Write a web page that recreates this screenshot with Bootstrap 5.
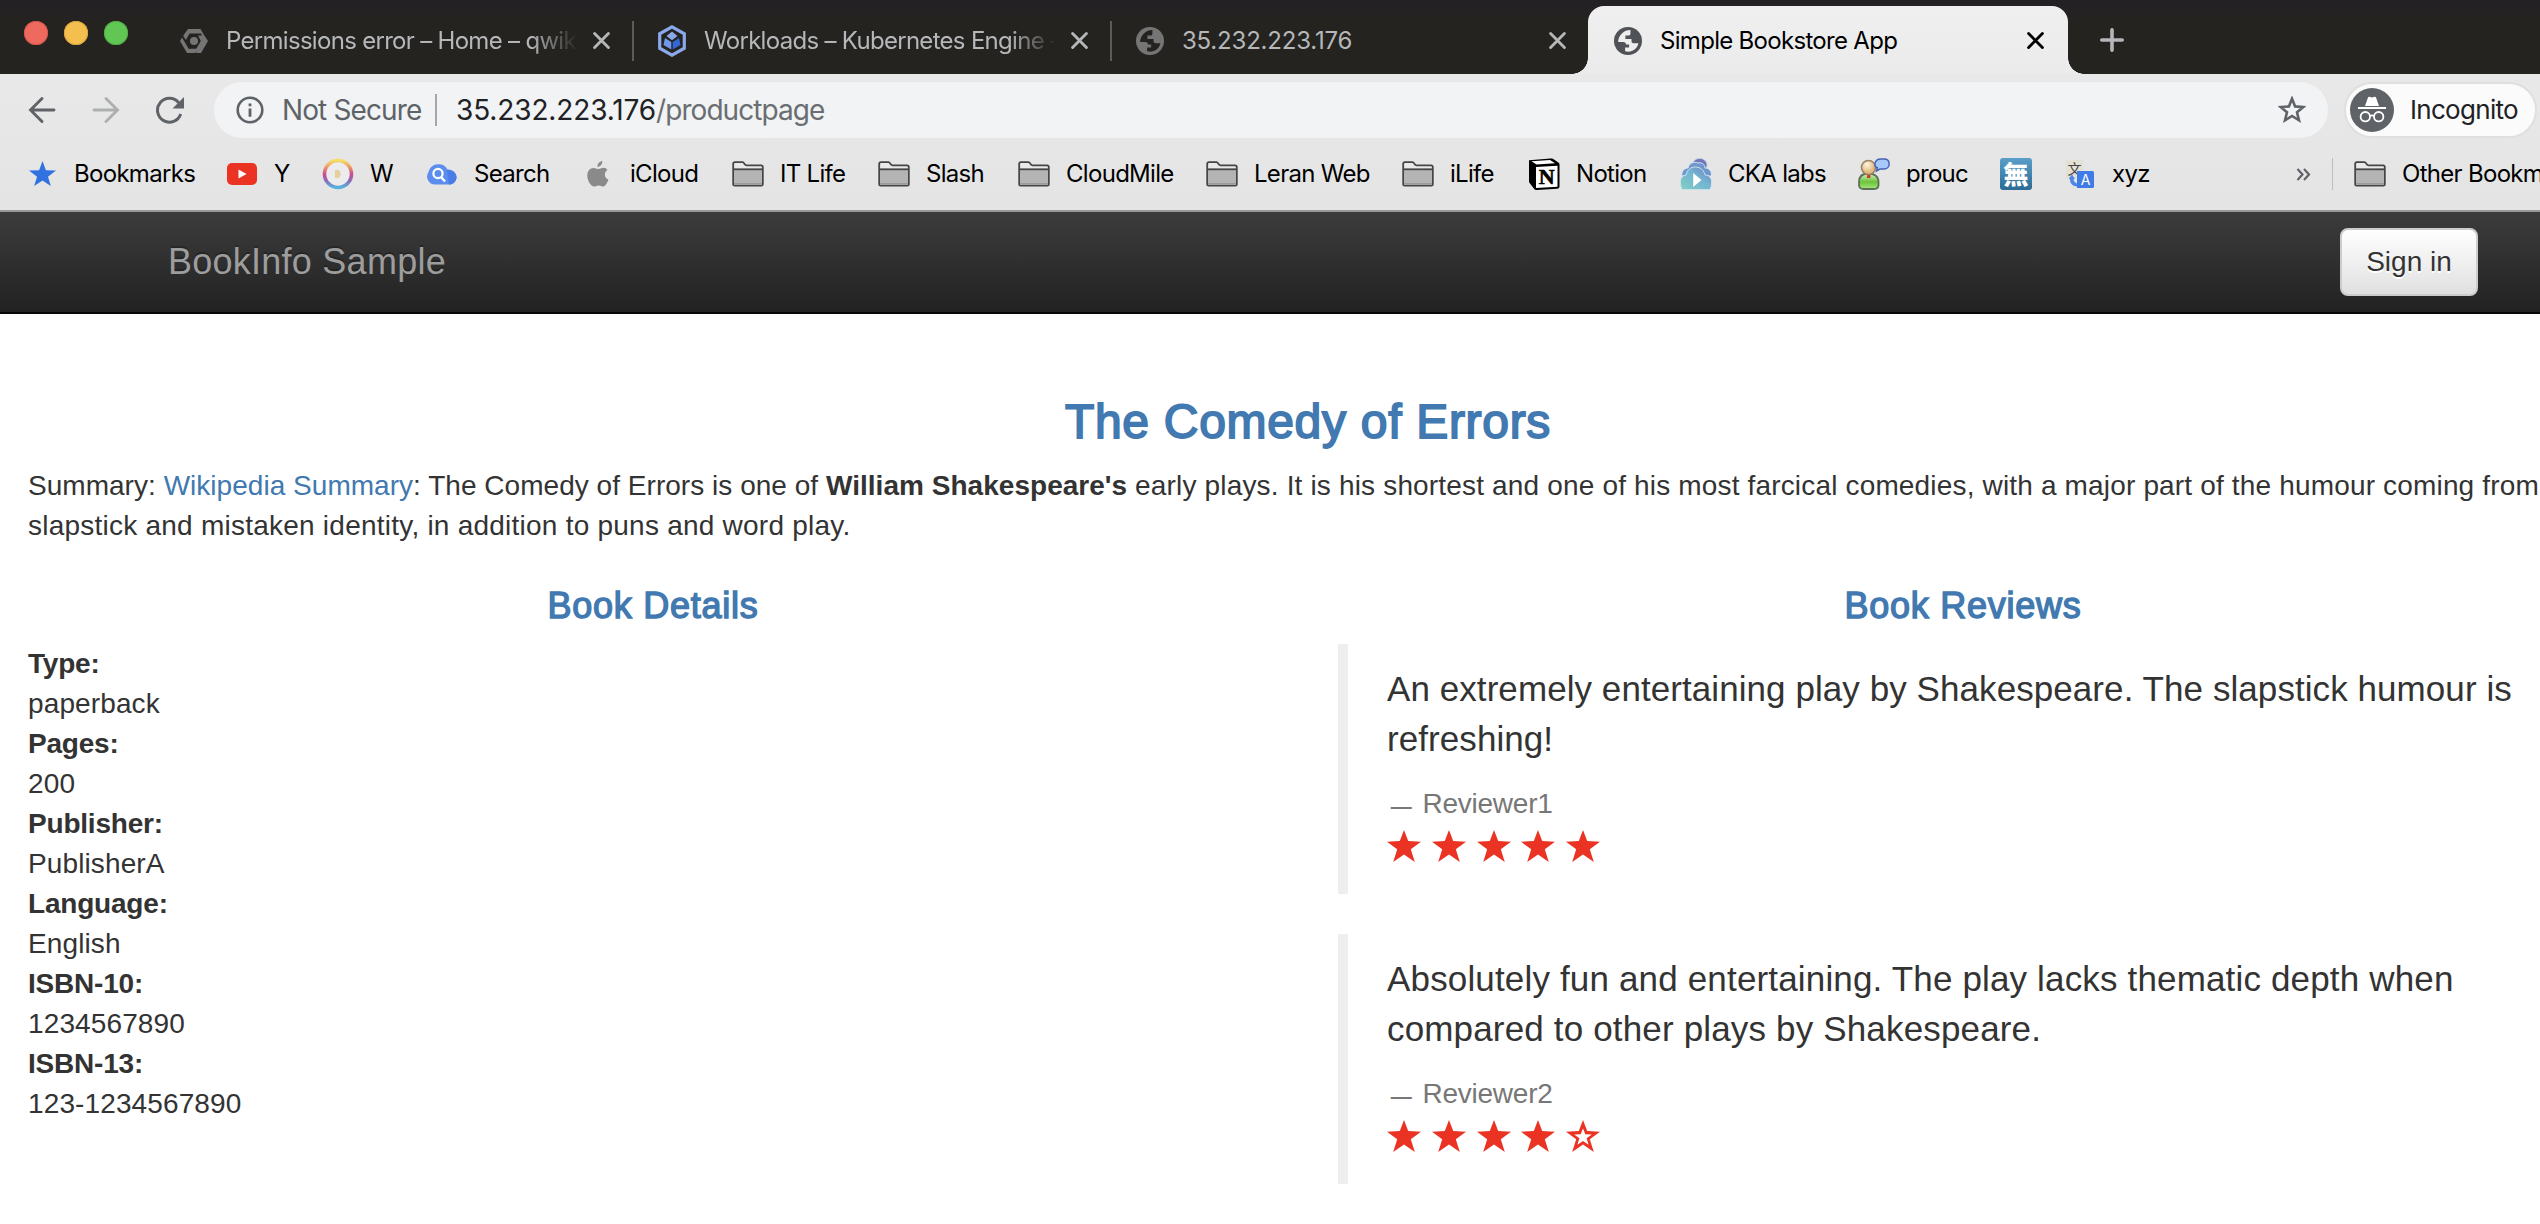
<!DOCTYPE html>
<html lang="en">
<head>
<meta charset="utf-8">
<title>Simple Bookstore App</title>
<link rel="stylesheet" href="https://cdn.jsdelivr.net/npm/bootstrap@5.3.0/dist/css/bootstrap.min.css">
<style>
html,body{width:2540px;height:1224px;overflow:hidden;margin:0;background:#fff}
body{font-family:"Liberation Sans",Arial,sans-serif;font-size:28px;line-height:40px;color:#333}
svg{display:block;flex:none}
.browser{font-family:Inter,Roboto,sans-serif;font-size:24px;line-height:32px;letter-spacing:-.7px;color:#000;background:linear-gradient(#ebebeb,#e4e4e4);height:212px;border-bottom:2px solid #999}
.digits{letter-spacing:-.2px}
/* tab strip */
.strip{height:74px;background:linear-gradient(#242124 0,#242124 6px,#242320 20px);color:#b5b7b9}
.lights{width:154px;padding:21px 0 0 24px;gap:16px}
.lights i{width:24px;height:24px;border-radius:50%}
.l-red{background:#ee6a5f;box-shadow:inset 0 0 0 1px #d9554b}
.l-yel{background:#f5bf4f;box-shadow:inset 0 0 0 1px #dca73c}
.l-grn{background:#62c655;box-shadow:inset 0 0 0 1px #50ae43}
.btab{width:478px;padding:7px 22px 0 26px;position:relative}
.btab .ico{width:28px;margin-right:18px}
.btab .label{width:350px;overflow:hidden;white-space:nowrap}
.fade-end{-webkit-mask-image:linear-gradient(90deg,#000 305px,transparent 352px);mask-image:linear-gradient(90deg,#000 305px,transparent 352px)}
.btab .shut{margin-left:17px}
.line-end{background:linear-gradient(#5c5c5b,#5c5c5b) no-repeat 478px 21px/2px 40px;background-origin:border-box;width:480px;margin-right:-2px}
.btab.on{width:480px;margin-top:6px;height:68px;padding-top:1px;background:linear-gradient(#efefef,#ebebeb);border-radius:16px 16px 0 0;color:#000}
.btab.on::before,.btab.on::after{content:"";position:absolute;bottom:0;width:16px;height:16px}
.btab.on::before{left:-16px;background:radial-gradient(circle at 0 0,transparent 15.5px,#ebebeb 16px)}
.btab.on::after{right:-16px;background:radial-gradient(circle at 100% 0,transparent 15.5px,#ebebeb 16px)}
.plus{margin:28px 0 0 32px}
/* address row */
.address{height:72px;padding:8px 3px 8px 27px}
.nav-ico{width:64px}
.omni{width:2114px;height:56px;margin-left:-5px;border-radius:28px;background:#f1f3f4;padding:0 22px 0 22px;font-size:28px}
.secure{color:#5f6368;letter-spacing:-.88px;margin-left:18px;width:153px}
.rule{width:2px;height:32px;background:#a4a7ab}
.thin{width:1px;background:#bdbdbd}
.host{margin-left:19px;color:#202124;letter-spacing:-.12px}
.path{color:#6a6d71;letter-spacing:-.95px}
.incog{width:193px;height:56px;margin-left:16px;border:2px solid #dfdfdf;border-radius:28px;background:#fbfbfb;padding-left:4px;font-size:26px;color:#202124}
.incog span{margin-left:16px}
/* bookmarks */
.marks{display:grid;grid-template-columns:200px 96px 104px 156px 150px 146px 140px 188px 196px 126px 152px 178px 142px 64px 232px 36px 22px auto;padding:12px 0 0 26px;height:64px;width:2640px;align-items:start}
.marks>div{display:flex;align-items:center;gap:16px;height:32px;white-space:nowrap}
.marks .ico{width:32px;display:flex;justify-content:center}
/* page */
.topbar{height:102px;padding:0 62px 0 168px;background:linear-gradient(#3c3c3c,#222);border-bottom:2px solid #080808}
.topbar .navbar-brand{font-size:36px;line-height:40px;color:#9d9d9d;letter-spacing:.25px;text-shadow:0 -2px 0 rgba(0,0,0,.25);margin:0;padding:0}
.signin{width:138px;height:68px;padding:0;font-size:28px;line-height:40px;color:#333;border:2px solid #ccc;border-radius:8px;background:linear-gradient(#fff,#e0e0e0);text-shadow:0 2px 0 #fff;box-shadow:inset 0 2px 0 rgba(255,255,255,.15)}
.sheet{width:2620px;margin-left:-2px}
.sheet>.row{--bs-gutter-x:60px;margin:0}
.lower{padding-top:40px}
h3,h4{color:#4179b0;text-align:center;font-weight:400;margin:0}
h3{font-size:48px;line-height:52px;letter-spacing:.7px;-webkit-text-stroke:1.8px #4179b0;padding-top:82px}
h4{font-size:36px;line-height:40px;letter-spacing:.76px;-webkit-text-stroke:1.4px #4179b0}
.summary{margin:18px 0 0;white-space:nowrap}
.summary a{color:#4179b0;text-decoration:none}
.s1{letter-spacing:.03px}.s2{letter-spacing:.165px}.s3{letter-spacing:.235px}
.facts{margin:18px 0 0}
.facts dt{font-weight:700;letter-spacing:-.2px}
.facts dd{margin:0;letter-spacing:.12px}
.review{border-left:10px solid #eee;padding:20px 0 0 39px;height:250px;margin:0 0 40px;white-space:nowrap}
h4+.review{margin-top:18px}
.review p{font-size:35px;line-height:50px;margin:0 0 20px;letter-spacing:.16px}
.review .w1{letter-spacing:.07px}
.review cite{display:block;font-style:normal;color:#777;letter-spacing:-.25px;height:40px}
.dash{display:inline-block;width:28px;text-align:center;font-size:21px;font-weight:700;line-height:1}
.stars{gap:10.8px;padding-top:6px}
</style>
</head>
<body>
<svg width="0" height="0" class="position-absolute">
<defs>
<symbol id="x" viewBox="0 0 16 16"><path d="M1.500 1.500l13 13M14.500 1.500l-13 13" stroke="currentColor" stroke-width="2.700" stroke-linecap="round"/></symbol>
<symbol id="globe" viewBox="0 0 28 28"><circle cx="14" cy="14" r="14" fill="currentColor"/><path d="M16.500 3c-4 .1-7 1.500-9.300 4.200-2 2.300-3 4.900-3.100 7.800h5.200c2 0 2.600 1 2.600 2.400h3.200v3.200h-4v3.700c3.800 1.200 8.100-.1 10.800-3 1.200-1.400 2.200-3.400 2.500-5.100h-4.800c-1.600 0-2.100-1-2.100-2.400v-1.900h-6.100V8.500h3.400c1.500 0 1.600-1 1.600-2.500z" fill="var(--land)"/></symbol>
<symbol id="folder" viewBox="0 0 32 26"><path d="M1.200 23V3c0-1.200.6-1.800 1.800-1.800h7.500c1.800 0 2 3.200 4 3.200H29c1.200 0 1.800.6 1.800 1.800V23c0 1-.6 1.600-1.600 1.600H2.800c-1 0-1.600-.6-1.600-1.600z" fill="#e9e9e9" stroke="#454545" stroke-width="1.800"/><path d="M2 8.500h28V23.700H2z" fill="#b4b4b4"/><path d="M2 22h28v1.700H2z" fill="#9b9b9b"/><path d="M1.200 8.300h29.600" stroke="#454545" stroke-width="1.800"/></symbol>
<symbol id="st" viewBox="0 0 34 32"><path d="M17 0l4.200 11.100L34 11.700 23.800 19.300 27.800 32 17 24.600 6.200 32l4-12.700L0 11.700l12.800-.6z" fill="#eb3323"/></symbol>
<symbol id="st0" viewBox="0 0 34 32"><path fill-rule="evenodd" d="M17 0l4.200 11.100L34 11.700 23.800 19.300 27.800 32 17 24.600 6.200 32l4-12.700L0 11.700l12.800-.6zM17 8.500l-2.300 5.700-6.500.2 5.200 3.900-2 6.500L17 21l5.600 3.800-2-6.500 5.200-3.900-6.500-.2z" fill="#eb3323"/></symbol>
</defs></svg>

<div class="browser">
  <div class="strip d-flex">
    <div class="lights d-flex"><i class="l-red"></i><i class="l-yel"></i><i class="l-grn"></i></div>
    <div class="btab line-end d-flex align-items-center">
      <svg class="ico" height="28" viewBox="0 0 28 26"><path d="M8 1h12.500l2.700 4.500H9.600L5.800 12 3.200 7.800zM0 13l2-3.500L8.800 21l2-.2h7L15.200 25H7zM21 5.500h2L28 13l-7 12h-4.500l-1.500-2.200L20.800 13 18 7.500h4z" fill="#757575"/><circle cx="14" cy="13" r="4" fill="#757575"/></svg>
      <div class="label fade-end">Permissions error – Home – qwikl</div>
      <svg class="shut" width="17" height="17"><use href="#x"/></svg>
    </div>
    <div class="btab line-end d-flex align-items-center">
      <svg class="ico" height="32" viewBox="0 0 28 32"><path d="M14 1.800l12.300 7v14.400L14 30.200 1.700 23.200V8.800z" fill="none" stroke="#8aa8ea" stroke-width="3.200"/><path d="M14 6.500l5.500 4.500L14 15.200 8.500 11z" fill="#8aa8ea"/><path d="M7 13l6.300 4v7.500L5.500 20z" fill="#6f97ea"/><path d="M21 13l-6.300 4v7.500l7.800-4.500z" fill="#3367d6"/></svg>
      <div class="label fade-end">Workloads – Kubernetes Engine –</div>
      <svg class="shut" width="17" height="17"><use href="#x"/></svg>
    </div>
    <div class="btab d-flex align-items-center">
      <svg class="ico" height="28" style="--land:#242320" color="#757575"><use href="#globe"/></svg>
      <div class="label digits">35.232.223.176</div>
      <svg class="shut" width="17" height="17"><use href="#x"/></svg>
    </div>
    <div class="btab on d-flex align-items-center">
      <svg class="ico" height="28" style="--land:#eee" color="#4f5357"><use href="#globe"/></svg>
      <div class="label">Simple Bookstore App</div>
      <svg class="shut" width="17" height="17"><use href="#x"/></svg>
    </div>
    <svg class="plus" width="24" height="24"><path d="M12 1.800v20.400M1.800 12h20.400" stroke="#b5b7b9" stroke-width="3.600" stroke-linecap="round"/></svg>
  </div>

  <div class="address d-flex align-items-center">
    <svg class="nav-ico" height="28" viewBox="0 0 64 28"><path d="M15 2.500L3.500 14 15 25.500M3.500 14H27" fill="none" stroke="#5f6368" stroke-width="2.900" stroke-linecap="round"/></svg>
    <svg class="nav-ico" height="28" viewBox="0 0 64 28"><path d="M15 2.500L26.500 14 15 25.500M26.500 14H3" fill="none" stroke="#aeafb0" stroke-width="2.900" stroke-linecap="round"/></svg>
    <svg class="nav-ico" height="28" viewBox="0 0 64 28"><path d="M25.700 18A11.900 11.900 0 1 1 23.700 6.800" fill="none" stroke="#5f6368" stroke-width="3"/><path d="M29 1v11.500H17.500z" fill="#5f6368"/></svg>
    <div class="omni d-flex align-items-center">
      <svg width="28" height="28" viewBox="0 0 28 28"><circle cx="14" cy="14" r="12.300" fill="none" stroke="#5f6368" stroke-width="2.600"/><path d="M12.600 12.500h2.800v8.300h-2.800zM12.600 7.500h2.800v2.700h-2.800z" fill="#5f6368"/></svg>
      <span class="secure">Not Secure</span>
      <span class="rule"></span>
      <span class="host">35.232.223.176</span><span class="path">/productpage</span>
      <svg class="ms-auto" width="28" height="28" viewBox="0 0 28 28"><path d="M14 2.700l3.100 7.700 8.200.6-6.300 5.300 2 8L14 20l-7 4.300 2-8L2.700 11l8.200-.6z" fill="none" stroke="#5f6368" stroke-width="2.600"/></svg>
    </div>
    <div class="incog d-flex align-items-center">
      <svg width="44" height="44" viewBox="0 0 44 44"><circle cx="22" cy="22" r="22" fill="#5f6368"/><path d="M15 18l3-8.500c.4-1 1.200-.9 2-.5 1.500.6 2.500.6 4 0 .8-.4 1.600-.5 2 .5l3 8.500zM8 19h28v2H8z" fill="#fff"/><g fill="none" stroke="#fff" stroke-width="1.800"><circle cx="15.300" cy="28.700" r="4.700"/><circle cx="28.700" cy="28.700" r="4.700"/><path d="M20 28c1.300-.8 2.700-.8 4 0"/></g></svg>
      <span>Incognito</span>
    </div>
  </div>

  <div class="marks">
    <div><span class="ico"><svg width="27" height="26" viewBox="0 0 27 26"><path d="M13.500 0l3.400 9.300 10.100.3-8 6.100L21.800 25l-8.300-5.400L5.200 25 8 15.700 0 9.600l10.100-.3z" fill="#3272e0"/></svg></span>Bookmarks</div>
    <div><span class="ico"><svg width="30" height="22"><rect width="30" height="22" rx="5" fill="#eb3323"/><path d="M11.500 6.500l8 4.500-8 4.500z" fill="#fff"/></svg></span>Y</div>
    <div><span class="ico"><svg width="32" height="32" viewBox="0 0 32 32"><defs><linearGradient id="rg" x2="0" y2="1"><stop offset="0" stop-color="#f6dc62"/><stop offset=".22" stop-color="#eda06a"/><stop offset=".5" stop-color="#cf4a8d"/><stop offset=".75" stop-color="#8a6dba"/><stop offset="1" stop-color="#56b4dc"/></linearGradient></defs><circle cx="16" cy="16" r="13.500" fill="#ececee" stroke="url(#rg)" stroke-width="3.600"/><path d="M13 12h4l2 4-2 4h-4z" fill="#e6cf9c"/></svg></span>W</div>
    <div><span class="ico"><svg width="30" height="22" viewBox="0 0 30 22"><path d="M8 21.500A8 8 0 0 1 1.500 9 10.300 10.300 0 0 1 20.500 6.500 8 8 0 0 1 29.500 14c0 4-3 7.500-7 7.500z" fill="#5b8def"/><path d="M20 7l2 14.500c4 0 7.500-3.300 7.500-7.300S25 7 20 7z" fill="#4a7ce8"/><circle cx="11" cy="10.500" r="4.600" fill="none" stroke="#fff" stroke-width="2.200"/><path d="M14 14l4 4.500" stroke="#fff" stroke-width="2.400"/></svg></span>Search</div>
    <div><span class="ico"><svg width="22" height="26" viewBox="0 0 22 26"><path d="M15.300 0c.3 3-2 5.800-4.800 5.900C10.200 3 12.500.4 15.300 0zM20.500 9c-4 2.500-3.300 7.800.9 9.500-1 3-3 6.900-5.200 7-1.800 0-2.400-1.100-4.500-1.100s-2.800 1.100-4.500 1.100C3.700 25.500.3 19.500.3 14.500c0-4.900 3-7.600 6.200-7.600 2 0 3.500 1.200 4.800 1.200 1.200 0 3-1.300 5.200-1.300 1.600 0 3 .8 4 2.200z" fill="#8a8a8a"/></svg></span>iCloud</div>
    <div><svg class="ico" height="26"><use href="#folder"/></svg>IT Life</div>
    <div><svg class="ico" height="26"><use href="#folder"/></svg>Slash</div>
    <div><svg class="ico" height="26"><use href="#folder"/></svg>CloudMile</div>
    <div><svg class="ico" height="26"><use href="#folder"/></svg>Leran Web</div>
    <div><svg class="ico" height="26"><use href="#folder"/></svg>iLife</div>
    <div><svg width="32" height="32" viewBox="0 0 32 32"><path d="M1 2.200L22.500.6c1.500-.1 2.300.1 3.500 1l4.300 3c1 .8 1.200 1.300 1.200 2.500v21c0 1.700-.6 2.500-2.500 2.600L9 31.900c-1.400.1-2.200-.2-3-1.200l-4-5.200c-.8-1.100-1-1.700-1-2.800z" fill="#000"/><path d="M3.500 3.300L22 2l5 3.200L8.500 6.400z" fill="#fff"/><path d="M8 9l21.500-1.200v21L8 30z" fill="#fff"/><text x="18.700" y="26" text-anchor="middle" font-family="Liberation Serif,serif" font-weight="700" font-size="22" letter-spacing="0" stroke="#000" stroke-width=".6">N</text></svg>Notion</div>
    <div><svg width="32" height="32" viewBox="0 0 32 32"><defs><linearGradient id="cg" x1="0" y1="1" x2="1" y2="0"><stop offset="0" stop-color="#83d0c2"/><stop offset=".55" stop-color="#73b4d2"/><stop offset="1" stop-color="#7180c0"/></linearGradient></defs><path d="M12 8c0-4 3-7.500 8-7.500 4 0 7 3 7 7l-2 8H12z" fill="#6f78b8" stroke="#c4cbe2" stroke-width=".8"/><path d="M2 18c-1-4 2-8 6-8 1-5 6-7 10-5 3-1 7 1 7 5 4 0 7 3 6.500 8z" fill="#6d97cd" stroke="#dce8f2" stroke-width="1"/><path d="M2.500 31.700C1 30.500.3 27 .3 24c0-4 2.200-6.500 5.700-7 1-5 4.500-8 9.500-8s8.500 3.500 9.500 8c4 0 6.700 3 6.700 7 0 3-.5 6-2 7.700z" fill="url(#cg)" stroke="#dce8f2" stroke-width=".9"/><path d="M13.200 15l8.300 7-8.300 7z" fill="#fff"/></svg>CKA labs</div>
    <div><svg width="32" height="32" viewBox="0 0 32 32"><defs><linearGradient id="gg" x2="0" y2="1"><stop offset="0" stop-color="#d6efc4"/><stop offset=".55" stop-color="#6dc33a"/><stop offset="1" stop-color="#a5e87c"/></linearGradient><radialGradient id="hd" cx=".4" cy=".3"><stop offset="0" stop-color="#fff6e2"/><stop offset="1" stop-color="#e3bd85"/></radialGradient></defs><path d="M1 24c0-6 4-8.500 9.500-8.500S20.500 18 20.500 24v3c0 3-2 4-4.500 4H5.500C3 31 1 30 1 27z" fill="url(#gg)" stroke="#5c6f5a" stroke-width="1.800"/><path d="M9 15h3.500v5H9z" fill="#c8402a"/><circle cx="10.500" cy="9.500" r="7" fill="url(#hd)" stroke="#9a8264" stroke-width="1.600"/><path d="M23 1h3c3.500 0 5.200 2.200 5.200 5s-2 5-5.200 5h-4l-3.500 2 .8-3.200C17.500 9 16.500 7.500 17 5.500 17.500 2.500 19.500 1 23 1z" fill="#a6c8fa" stroke="#4663b4" stroke-width="1.500"/></svg>prouc</div>
    <div><svg width="32" height="32" viewBox="0 0 32 32"><defs><linearGradient id="bg2" x2="0" y2="1"><stop offset="0" stop-color="#5a9fc9"/><stop offset="1" stop-color="#2b6b95"/></linearGradient></defs><rect width="32" height="32" rx="3" fill="url(#bg2)"/><text x="16" y="25.500" text-anchor="middle" font-family="Noto Sans CJK TC,sans-serif" font-weight="900" font-size="25" letter-spacing="0" fill="#fff">無</text></svg></div>
    <div><svg width="32" height="32" viewBox="0 0 32 32"><path d="M2 2h17v18H2z" fill="#e4e1d4"/><text x="10.500" y="15.500" text-anchor="middle" font-family="Noto Sans CJK SC,sans-serif" font-size="14" letter-spacing="0" fill="#444">文</text><path d="M4.500 21l3.500-4.500 3 4.500H9.500c0 2 1.500 4 3.500 4.500v3C8 28 6 25 6 21z" fill="#4f86ec"/><path d="M13 13h15.500a1.500 1.500 0 0 1 1.500 1.500V28.500a1.500 1.500 0 0 1-1.500 1.500H13z" fill="#3f7ce8"/><text x="21.500" y="27" text-anchor="middle" font-family="Inter,sans-serif" font-size="14" letter-spacing="0" fill="#fff">A</text></svg>xyz</div>
    <div><svg width="15" height="13" viewBox="0 0 15 13"><path d="M1.500 1l5 5.500-5 5.500M8 1l5 5.500L8 12" fill="none" stroke="#5f6368" stroke-width="2.200"/></svg></div>
    <div><span class="rule thin"></span></div>
    <div><svg class="ico" height="26"><use href="#folder"/></svg>Other Bookmarks</div>
  </div>
</div>

<nav class="navbar topbar d-flex align-items-center justify-content-between">
  <a class="navbar-brand" href="#">BookInfo Sample</a>
  <button type="button" class="btn signin">Sign in</button>
</nav>

<main class="sheet">
  <div class="row"><div class="col-12">
    <h3>The Comedy of Errors</h3>
    <p class="summary"><span class="s1">Summary: <a href="#">Wikipedia Summary</a>: The Comedy of Errors is one of <b>William Shakespeare's</b></span><span class="s2"> early plays. It is his shortest and one of his most farcical comedies, with a major part of the humour coming from</span><br><span class="s3">slapstick and mistaken identity, in addition to puns and word play.</span></p>
  </div></div>
  <div class="row lower">
    <div class="col-6">
      <h4>Book Details</h4>
      <dl class="facts">
        <dt>Type:</dt><dd>paperback</dd>
        <dt>Pages:</dt><dd>200</dd>
        <dt>Publisher:</dt><dd>PublisherA</dd>
        <dt>Language:</dt><dd>English</dd>
        <dt>ISBN-10:</dt><dd>1234567890</dd>
        <dt>ISBN-13:</dt><dd>123-1234567890</dd>
      </dl>
    </div>
    <div class="col-6">
      <h4>Book Reviews</h4>
      <blockquote class="review">
        <p class="w1">An extremely entertaining play by Shakespeare. The slapstick humour is<br>refreshing!</p>
        <cite><span class="dash">—</span> Reviewer1</cite>
        <div class="stars d-flex"><svg width="34" height="32"><use href="#st"/></svg><svg width="34" height="32"><use href="#st"/></svg><svg width="34" height="32"><use href="#st"/></svg><svg width="34" height="32"><use href="#st"/></svg><svg width="34" height="32"><use href="#st"/></svg></div>
      </blockquote>
      <blockquote class="review">
        <p>Absolutely fun and entertaining. The play lacks thematic depth when<br>compared to other plays by Shakespeare.</p>
        <cite><span class="dash">—</span> Reviewer2</cite>
        <div class="stars d-flex"><svg width="34" height="32"><use href="#st"/></svg><svg width="34" height="32"><use href="#st"/></svg><svg width="34" height="32"><use href="#st"/></svg><svg width="34" height="32"><use href="#st"/></svg><svg width="34" height="32"><use href="#st0"/></svg></div>
      </blockquote>
    </div>
  </div>
</main>
<script src="https://cdn.jsdelivr.net/npm/bootstrap@5.3.0/dist/js/bootstrap.bundle.min.js"></script>
</body>
</html>
